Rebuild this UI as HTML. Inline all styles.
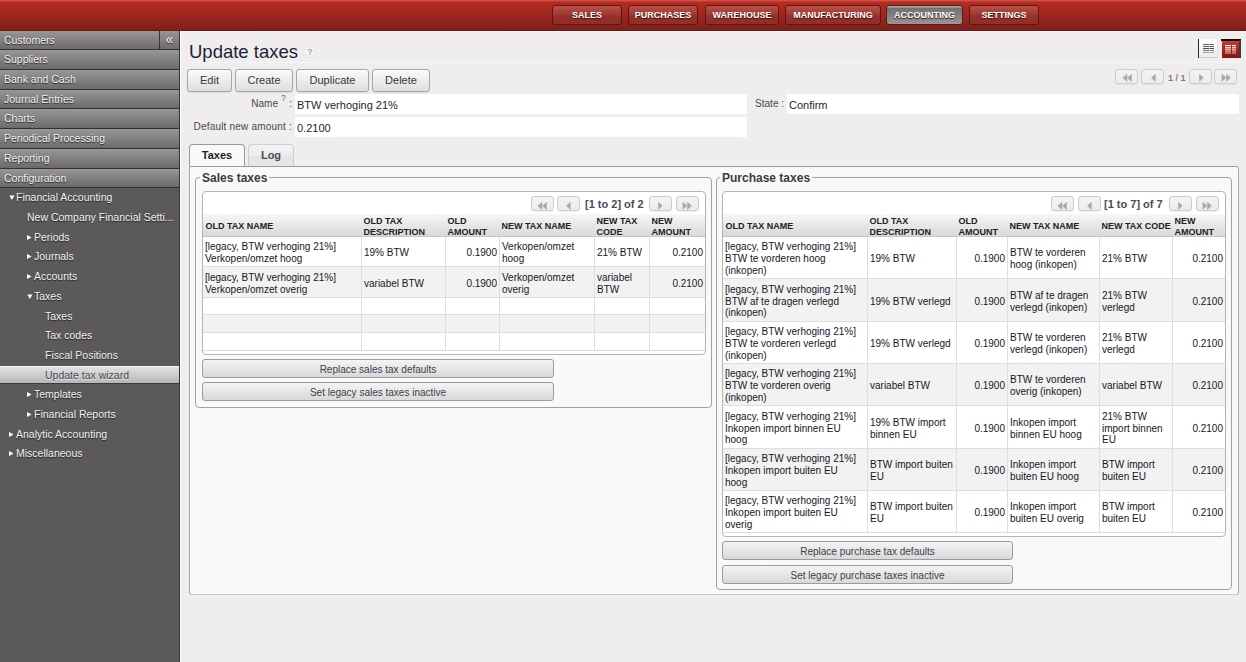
<!DOCTYPE html>
<html><head><meta charset="utf-8">
<style>
*{box-sizing:border-box;margin:0;padding:0}
html,body{width:1246px;height:662px;overflow:hidden}
body{position:relative;background:#efeded;font-family:"Liberation Sans",sans-serif;font-size:10px;color:#333}
.a{position:absolute;white-space:nowrap}
/* top bar */
#top{left:0;top:0;width:1246px;height:31px;background:linear-gradient(#cd4e44 0,#cd4e44 1px,#b72c21 2px,#80201a 29px);border-bottom:1px solid #74140f}
.mb{top:5px;height:20px;border:1px solid #5e1410;border-radius:3px;background:linear-gradient(#c0594f 0,#b34b41 1.5px,#a13c34 45%,#952f29 55%,#922d27 100%);color:#fff;font-weight:bold;font-size:9px;line-height:18px;text-align:center;text-shadow:0 1px 1px #3a0a06}
.mb.act{background:linear-gradient(#a6a9a9 0,#a0a2a2 1px,#727272 2.5px,#808080 50%,#979797 100%);border-color:#5a1a16}
/* sidebar */
#side{left:0;top:31px;width:180px;height:631px;background:#5b5959;border-right:1px solid #333}
.sh{left:0;width:179px;height:19.71px;background:linear-gradient(#989696,#6c6a6a);border-bottom:1px solid #333;color:#f4f4f4;font-size:10.5px;line-height:18px;padding-left:4px;text-shadow:0 1px 1px #222}
.si{left:0;width:179px;height:19.71px;color:#f4f4f4;font-size:10.5px;line-height:19px;text-shadow:0 1px 1px #222}
.tri{display:inline-block;width:7px}
#sel{left:0;top:365.5px;width:179px;height:18.5px;background:linear-gradient(#e2e2e2,#b6b6b6);border-top:1px solid #f4f4f4;border-bottom:1px solid #3a3a3a}
/* main */
#mainedge{left:180px;top:31px;width:1066px;height:631px;border-left:1px solid #fff;border-top:1px solid #fafafa}
.btn{top:69px;height:23px;border:1px solid #a6a6a6;border-radius:3px;background:linear-gradient(#fbfbfb,#dedede);font-size:11px;line-height:21px;text-align:center;color:#363646;box-shadow:0 1px 1px rgba(0,0,0,.08)}
.pg{width:23px;height:15px;border:1px solid #cdcdcd;border-radius:3px;background:linear-gradient(#f3f3f3,#ececec);box-shadow:0 1px 1px rgba(0,0,0,.06)}
.fld{background:#fff;font-size:11px;line-height:20px;padding-left:2px;padding-top:.5px;color:#1e1e2e}
.lbl{font-size:10px;color:#4a4a4a;text-align:right;padding-top:1px}
#panel{left:189px;top:166px;width:1050px;height:429px;background:#f9f9f9;border:1px solid #a9a9a9;border-top-color:#9a9a9a;border-bottom-color:#c9c9c9;border-radius:0 3px 3px 3px}
.fs{border:1px solid #a2a2a2;border-radius:4px}
.lg{font-size:12px;font-weight:bold;color:#3c3c3c;background:#f9f9f9;padding:0 2px}
.grid{background:#fff;border:1px solid #b4b4b4;border-radius:4px;overflow:hidden}
.gbtn{height:19px;border:1px solid #9c9c9c;border-radius:3px;background:linear-gradient(#f4f4f4,#d9d9d9);font-size:10px;line-height:17px;padding-top:1px;text-align:center;color:#40404e}
table{border-collapse:collapse;table-layout:fixed;position:absolute}
td{font-size:10px;line-height:11.7px;padding:0 2px 0 3px;vertical-align:middle;color:#2a2a3a;border-left:1px solid #dcdcdc;overflow:hidden;white-space:normal}
td:first-child{border-left:0}
tr{border-bottom:1px solid #dcdcdc}
tr.o{background:#f2f2f2}
td.r{text-align:right;padding-right:2px}
th{font-size:9px;font-weight:bold;line-height:10.9px;text-align:left;padding:0 2px 0 3px;color:#444;vertical-align:middle;white-space:normal}
.ghead{background:linear-gradient(#f7f7f7,#d9d9d9);border-bottom:1px solid #c6c6c6}
.ptxt{font-size:11px;font-weight:bold;color:#4a4a5a;line-height:15px;padding-top:2px}

.th{position:absolute;font-size:9px;font-weight:bold;line-height:10.9px;padding:3px 2px 0 2.5px;color:#222;display:flex;align-items:center;white-space:nowrap}
.row{position:absolute;background:#fff;border-bottom:1px solid #dedede}
.row.o{background:#f2f2f2}
.cell{position:absolute;top:0;bottom:0;display:flex;align-items:center;font-size:10px;line-height:11.7px;padding:3px 2px 0 2px;color:#16161e;white-space:nowrap;overflow:hidden}
.cell.bl{border-left:1px solid #dedede}
.cell.r{justify-content:flex-end;text-align:right}
</style></head><body>

<!-- TOP BAR -->
<div id="top" class="a"></div>
<div class="a mb" style="left:552px;width:70px">SALES</div>
<div class="a mb" style="left:628px;width:70px">PURCHASES</div>
<div class="a mb" style="left:705px;width:74px">WAREHOUSE</div>
<div class="a mb" style="left:785px;width:96px">MANUFACTURING</div>
<div class="a mb act" style="left:886px;width:77px">ACCOUNTING</div>
<div class="a mb" style="left:969px;width:70px">SETTINGS</div>

<!-- SIDEBAR -->
<div id="side" class="a"></div>
<div class="a sh" style="top:31px;height:19px;line-height:19px">Customers</div>
<div class="a sh" style="top:50px;height:20px;line-height:18px">Suppliers</div>
<div class="a sh" style="top:70px;height:20px;line-height:18px">Bank and Cash</div>
<div class="a sh" style="top:90px;height:19px;line-height:18px">Journal Entries</div>
<div class="a sh" style="top:109px;height:20px;line-height:18px">Charts</div>
<div class="a sh" style="top:129px;height:20px;line-height:18px">Periodical Processing</div>
<div class="a sh" style="top:149px;height:20px;line-height:18px">Reporting</div>
<div class="a sh" style="top:169px;height:19px;line-height:19px">Configuration</div>
<div class="a" style="left:159px;top:31px;width:1px;height:19px;background:#333"></div>
<div class="a" style="left:160px;top:31px;width:19px;height:18px;color:#fff;font-size:14px;line-height:16px;text-align:center;text-shadow:0 1px 1px #222">&laquo;</div>

<div id="sel" class="a"></div>
<div class="a si" style="top:188.3px;left:9px"><svg class="tri" width="7" height="8" style="vertical-align:0"><path d="M0.4 2.4 L5.4 2.4 L2.9 7 Z" fill="#fff"/></svg>Financial Accounting</div>
<div class="a si" style="top:208.0px;left:27px">New Company Financial Setti...</div>
<div class="a si" style="top:227.7px;left:27px"><svg class="tri" width="7" height="8" style="vertical-align:0"><path d="M0 2 L4.6 4.5 L0 7 Z" fill="#fff"/></svg>Periods</div>
<div class="a si" style="top:247.4px;left:27px"><svg class="tri" width="7" height="8" style="vertical-align:0"><path d="M0 2 L4.6 4.5 L0 7 Z" fill="#fff"/></svg>Journals</div>
<div class="a si" style="top:267.1px;left:27px"><svg class="tri" width="7" height="8" style="vertical-align:0"><path d="M0 2 L4.6 4.5 L0 7 Z" fill="#fff"/></svg>Accounts</div>
<div class="a si" style="top:286.8px;left:27px"><svg class="tri" width="7" height="8" style="vertical-align:0"><path d="M0.4 2.4 L5.4 2.4 L2.9 7 Z" fill="#fff"/></svg>Taxes</div>
<div class="a si" style="top:306.5px;left:45px">Taxes</div>
<div class="a si" style="top:326.2px;left:45px">Tax codes</div>
<div class="a si" style="top:345.9px;left:45px">Fiscal Positions</div>
<div class="a si" style="top:365.6px;left:45px;color:#454555;text-shadow:0 1px 0 #e8e8e8">Update tax wizard</div>
<div class="a si" style="top:385.3px;left:27px"><svg class="tri" width="7" height="8" style="vertical-align:0"><path d="M0 2 L4.6 4.5 L0 7 Z" fill="#fff"/></svg>Templates</div>
<div class="a si" style="top:405.0px;left:27px"><svg class="tri" width="7" height="8" style="vertical-align:0"><path d="M0 2 L4.6 4.5 L0 7 Z" fill="#fff"/></svg>Financial Reports</div>
<div class="a si" style="top:424.7px;left:9px"><svg class="tri" width="7" height="8" style="vertical-align:0"><path d="M0 2 L4.6 4.5 L0 7 Z" fill="#fff"/></svg>Analytic Accounting</div>
<div class="a si" style="top:444.4px;left:9px"><svg class="tri" width="7" height="8" style="vertical-align:0"><path d="M0 2 L4.6 4.5 L0 7 Z" fill="#fff"/></svg>Miscellaneous</div>

<!-- MAIN -->
<div id="mainedge" class="a"></div>
<div class="a" style="left:189px;top:41px;font-size:18.5px;line-height:22px;color:#1f1f33">Update taxes</div>
<div class="a" style="left:304px;top:46px;width:12px;height:12px;border-radius:6px;background:radial-gradient(circle at 50% 45%,#fbfbfb 0,#f1f1f1 55%,#e2e2e2 100%);box-shadow:0 0 1px rgba(0,0,0,.12);color:#a2a2a2;font-size:9px;line-height:12px;text-align:center;font-weight:bold">?</div>
<div class="a" style="left:189px;top:62px;width:1052px;height:1px;background:#f8f7f7"></div>

<!-- view switch -->
<div class="a" style="left:1198px;top:39px;width:1px;height:19px;background:#2a2a2a"></div>
<div class="a" style="left:1199px;top:39px;width:19px;height:19px;background:linear-gradient(#fdfdfd,#ececec);border-right:1px solid #e4e4e4;border-bottom:1px solid #cdcdcd"></div>
<div class="a" style="left:1221px;top:39px;width:20px;height:1.5px;background:#0c0c0c"></div>
<div class="a" style="left:1239px;top:40px;width:1.5px;height:18px;background:#3a3a3a"></div>
<div class="a" style="left:1222px;top:40.5px;width:17px;height:17.5px;background:linear-gradient(#d0382c,#a82218 50%,#7a1812)"></div>
<svg class="a" style="left:1198px;top:39px" width="44" height="20">
<rect x="5" y="5" width="6.5" height="1" fill="#6a6a6a"/><rect x="12" y="5" width="4" height="1" fill="#6a6a6a"/>
<rect x="5" y="7" width="6.5" height="1" fill="#5a5a5a"/><rect x="12" y="7" width="4" height="1" fill="#5a5a5a"/>
<rect x="5" y="9" width="6.5" height="1" fill="#4a4a4a"/><rect x="12" y="9" width="4" height="1" fill="#4a4a4a"/>
<rect x="5" y="11" width="6.5" height="1" fill="#777"/><rect x="12" y="11" width="4" height="1" fill="#777"/>
<rect x="5" y="13" width="6.5" height="1" fill="#999"/><rect x="12" y="13" width="4" height="1" fill="#999"/>
<g fill="#fff"><rect x="27" y="6" width="6" height="1.2"/><rect x="34" y="6" width="4" height="1.2"/>
<rect x="27" y="8.2" width="6" height="1.2"/><rect x="34" y="8.2" width="4" height="1.2"/>
<rect x="27" y="10.3" width="6" height="1.2" opacity=".85"/><rect x="34" y="10.3" width="4" height="1.2" opacity=".85"/>
<rect x="27" y="12.3" width="6" height="1.2" opacity=".6"/><rect x="34" y="12.3" width="4" height="1.2" opacity=".6"/>
<rect x="27" y="13.8" width="6" height="1" opacity=".45"/><rect x="34" y="13.8" width="4" height="1" opacity=".45"/></g>
</svg>
<!-- action buttons -->
<div class="a btn" style="left:187px;width:45px">Edit</div>
<div class="a btn" style="left:235px;width:58px">Create</div>
<div class="a btn" style="left:296px;width:73px">Duplicate</div>
<div class="a btn" style="left:372px;width:58px">Delete</div>

<!-- top pager -->
<div class="a" style="left:1168px;top:71px;font-size:9px;font-weight:bold;color:#857a6e;line-height:15px">1 / 1</div>

<!-- form -->
<div class="a lbl" style="left:200px;top:94px;width:78px;line-height:18px">Name</div>
<div class="a" style="left:281px;top:93px;font-size:8.5px;color:#3f8a3a;line-height:10px">?</div>
<div class="a lbl" style="left:286px;top:94px;width:6px;line-height:18px">:</div>
<div class="a fld" style="left:295px;top:94px;width:452px;height:20px">BTW verhoging 21%</div>
<div class="a lbl" style="left:186px;top:117px;width:106px;line-height:18px;letter-spacing:.2px">Default new amount :</div>
<div class="a fld" style="left:295px;top:117px;width:452px;height:20px">0.2100</div>
<div class="a lbl" style="left:740px;top:94px;width:44px;line-height:18px">State :</div>
<div class="a fld" style="left:787px;top:94px;width:452px;height:20px">Confirm</div>

<!-- tabs -->
<div id="panel" class="a"></div>
<div class="a" style="left:189px;top:144px;width:56px;height:22px;border:1px solid #9a9a9a;border-bottom:0;border-radius:4px 4px 0 0;background:#f9f9f9;font-size:11px;font-weight:bold;line-height:21px;text-align:center;color:#222">Taxes</div>
<div class="a" style="left:248px;top:144px;width:46px;height:22px;border:1px solid #cfcfcf;border-bottom:0;border-radius:4px 4px 0 0;background:linear-gradient(#f3f3f3,#ececec 50%,#e3e3e3 52%,#e9e9e9);font-size:11px;font-weight:bold;line-height:20px;text-align:center;color:#4a4a5a">Log</div>

<!-- SALES -->
<div class="a fs" style="left:195px;top:177px;width:517px;height:231px"></div>
<div class="a lg" style="left:200px;top:170.5px;line-height:14px">Sales taxes</div>
<div class="a grid" style="left:202px;top:191px;width:504px;height:164px"></div>

<!-- PURCHASE -->
<div class="a fs" style="left:716px;top:177px;width:516px;height:413px"></div>
<div class="a lg" style="left:720px;top:170.5px;line-height:14px">Purchase taxes</div>
<div class="a grid" style="left:722px;top:191px;width:504px;height:346px"></div>

<!-- TOP PAGER -->
<div class="a pg" style="left:1115px;top:69px;height:15px"><svg width="21" height="14" style="position:absolute;left:.7px;top:-1px;overflow:visible"><path d="M5.6 8.8 L10.2 4.7 L10.2 12.9 Z M10.2 8.8 L14.8 4.7 L14.8 12.9 Z" fill="#a9a9a9"/></svg></div>
<div class="a pg" style="left:1141px;top:69px;height:15px"><svg width="21" height="14" style="position:absolute;left:.7px;top:-1px;overflow:visible"><path d="M8.1 8.8 L12.6 4.7 L12.6 12.9 Z" fill="#a9a9a9"/></svg></div>
<div class="a pg" style="left:1189px;top:69px;height:15px"><svg width="21" height="14" style="position:absolute;left:.7px;top:-1px;overflow:visible"><path d="M8.2 4.7 L12.5 8.8 L8.2 12.9 Z" fill="#a9a9a9"/></svg></div>
<div class="a pg" style="left:1214px;top:69px;height:15px"><svg width="21" height="14" style="position:absolute;left:.7px;top:-1px;overflow:visible"><path d="M5.6 4.7 L10.2 8.8 L5.6 12.9 Z M10.2 4.7 L14.8 8.8 L10.2 12.9 Z" fill="#a9a9a9"/></svg></div>
<!-- SALES GRID -->
<div class="a pg" style="left:531px;top:196px"><svg width="21" height="14" style="position:absolute;left:0;top:0;overflow:visible"><path d="M5.6 8.8 L10.2 4.7 L10.2 12.9 Z M10.2 8.8 L14.8 4.7 L14.8 12.9 Z" fill="#a9a9a9"/></svg></div>
<div class="a pg" style="left:557px;top:196px"><svg width="21" height="14" style="position:absolute;left:0;top:0;overflow:visible"><path d="M8.1 8.8 L12.6 4.7 L12.6 12.9 Z" fill="#a9a9a9"/></svg></div>
<div class="a pg" style="left:649px;top:196px"><svg width="21" height="14" style="position:absolute;left:0;top:0;overflow:visible"><path d="M8.2 4.7 L12.5 8.8 L8.2 12.9 Z" fill="#a9a9a9"/></svg></div>
<div class="a pg" style="left:676px;top:196px"><svg width="21" height="14" style="position:absolute;left:0;top:0;overflow:visible"><path d="M5.6 4.7 L10.2 8.8 L5.6 12.9 Z M10.2 4.7 L14.8 8.8 L10.2 12.9 Z" fill="#a9a9a9"/></svg></div>
<div class="a ptxt" style="left:585px;top:195px">[1 to 2] of 2</div>
<div class="a ghead" style="left:203px;top:214px;width:502px;height:23px"></div>
<div class="a th" style="left:203px;top:214px;width:158px;height:22px">OLD TAX NAME</div>
<div class="a th" style="left:361px;top:214px;width:84px;height:22px">OLD TAX<br>DESCRIPTION</div>
<div class="a th" style="left:445px;top:214px;width:54px;height:22px">OLD<br>AMOUNT</div>
<div class="a th" style="left:499px;top:214px;width:95px;height:22px">NEW TAX NAME</div>
<div class="a th" style="left:594px;top:214px;width:55px;height:22px">NEW TAX<br>CODE</div>
<div class="a th" style="left:649px;top:214px;width:56px;height:22px">NEW<br>AMOUNT</div>
<div class="a row" style="left:203px;top:237px;width:502px;height:30px">
<div class="cell" style="left:0px;width:158px">[legacy, BTW verhoging 21%]<br>Verkopen/omzet hoog</div>
<div class="cell bl" style="left:158px;width:84px">19% BTW</div>
<div class="cell r bl" style="left:242px;width:54px">0.1900</div>
<div class="cell bl" style="left:296px;width:95px">Verkopen/omzet<br>hoog</div>
<div class="cell bl" style="left:391px;width:55px">21% BTW</div>
<div class="cell r bl" style="left:446px;width:56px">0.2100</div>
</div>
<div class="a row o" style="left:203px;top:267px;width:502px;height:31px">
<div class="cell" style="left:0px;width:158px">[legacy, BTW verhoging 21%]<br>Verkopen/omzet overig</div>
<div class="cell bl" style="left:158px;width:84px">variabel BTW</div>
<div class="cell r bl" style="left:242px;width:54px">0.1900</div>
<div class="cell bl" style="left:296px;width:95px">Verkopen/omzet<br>overig</div>
<div class="cell bl" style="left:391px;width:55px">variabel<br>BTW</div>
<div class="cell r bl" style="left:446px;width:56px">0.2100</div>
</div>
<div class="a row" style="left:203px;top:298px;width:502px;height:17px">
<div class="cell" style="left:0px;width:158px"></div>
<div class="cell bl" style="left:158px;width:84px"></div>
<div class="cell r bl" style="left:242px;width:54px"></div>
<div class="cell bl" style="left:296px;width:95px"></div>
<div class="cell bl" style="left:391px;width:55px"></div>
<div class="cell r bl" style="left:446px;width:56px"></div>
</div>
<div class="a row o" style="left:203px;top:315px;width:502px;height:18px">
<div class="cell" style="left:0px;width:158px"></div>
<div class="cell bl" style="left:158px;width:84px"></div>
<div class="cell r bl" style="left:242px;width:54px"></div>
<div class="cell bl" style="left:296px;width:95px"></div>
<div class="cell bl" style="left:391px;width:55px"></div>
<div class="cell r bl" style="left:446px;width:56px"></div>
</div>
<div class="a row" style="left:203px;top:333px;width:502px;height:18px">
<div class="cell" style="left:0px;width:158px"></div>
<div class="cell bl" style="left:158px;width:84px"></div>
<div class="cell r bl" style="left:242px;width:54px"></div>
<div class="cell bl" style="left:296px;width:95px"></div>
<div class="cell bl" style="left:391px;width:55px"></div>
<div class="cell r bl" style="left:446px;width:56px"></div>
</div>
<div class="a gbtn" style="left:202px;top:359px;width:352px">Replace sales tax defaults</div>
<div class="a gbtn" style="left:202px;top:382px;width:352px">Set legacy sales taxes inactive</div>
<!-- PURCHASE GRID -->
<div class="a pg" style="left:1051px;top:196px"><svg width="21" height="14" style="position:absolute;left:0;top:0;overflow:visible"><path d="M5.6 8.8 L10.2 4.7 L10.2 12.9 Z M10.2 8.8 L14.8 4.7 L14.8 12.9 Z" fill="#a9a9a9"/></svg></div>
<div class="a pg" style="left:1078px;top:196px"><svg width="21" height="14" style="position:absolute;left:0;top:0;overflow:visible"><path d="M8.1 8.8 L12.6 4.7 L12.6 12.9 Z" fill="#a9a9a9"/></svg></div>
<div class="a pg" style="left:1169px;top:196px"><svg width="21" height="14" style="position:absolute;left:0;top:0;overflow:visible"><path d="M8.2 4.7 L12.5 8.8 L8.2 12.9 Z" fill="#a9a9a9"/></svg></div>
<div class="a pg" style="left:1196px;top:196px"><svg width="21" height="14" style="position:absolute;left:0;top:0;overflow:visible"><path d="M5.6 4.7 L10.2 8.8 L5.6 12.9 Z M10.2 4.7 L14.8 8.8 L10.2 12.9 Z" fill="#a9a9a9"/></svg></div>
<div class="a ptxt" style="left:1104px;top:195px">[1 to 7] of 7</div>
<div class="a ghead" style="left:723px;top:214px;width:502px;height:23px"></div>
<div class="a th" style="left:723px;top:214px;width:144px;height:22px">OLD TAX NAME</div>
<div class="a th" style="left:867px;top:214px;width:89px;height:22px">OLD TAX<br>DESCRIPTION</div>
<div class="a th" style="left:956px;top:214px;width:51px;height:22px">OLD<br>AMOUNT</div>
<div class="a th" style="left:1007px;top:214px;width:92px;height:22px">NEW TAX NAME</div>
<div class="a th" style="left:1099px;top:214px;width:73px;height:22px">NEW TAX CODE</div>
<div class="a th" style="left:1172px;top:214px;width:53px;height:22px">NEW<br>AMOUNT</div>
<div class="a row" style="left:723px;top:237px;width:502px;height:42px">
<div class="cell" style="left:0px;width:144px">[legacy, BTW verhoging 21%]<br>BTW te vorderen hoog<br>(inkopen)</div>
<div class="cell bl" style="left:144px;width:89px">19% BTW</div>
<div class="cell r bl" style="left:233px;width:51px">0.1900</div>
<div class="cell bl" style="left:284px;width:92px">BTW te vorderen<br>hoog (inkopen)</div>
<div class="cell bl" style="left:376px;width:73px">21% BTW</div>
<div class="cell r bl" style="left:449px;width:53px">0.2100</div>
</div>
<div class="a row o" style="left:723px;top:279px;width:502px;height:43px">
<div class="cell" style="left:0px;width:144px">[legacy, BTW verhoging 21%]<br>BTW af te dragen verlegd<br>(inkopen)</div>
<div class="cell bl" style="left:144px;width:89px">19% BTW verlegd</div>
<div class="cell r bl" style="left:233px;width:51px">0.1900</div>
<div class="cell bl" style="left:284px;width:92px">BTW af te dragen<br>verlegd (inkopen)</div>
<div class="cell bl" style="left:376px;width:73px">21% BTW<br>verlegd</div>
<div class="cell r bl" style="left:449px;width:53px">0.2100</div>
</div>
<div class="a row" style="left:723px;top:322px;width:502px;height:42px">
<div class="cell" style="left:0px;width:144px">[legacy, BTW verhoging 21%]<br>BTW te vorderen verlegd<br>(inkopen)</div>
<div class="cell bl" style="left:144px;width:89px">19% BTW verlegd</div>
<div class="cell r bl" style="left:233px;width:51px">0.1900</div>
<div class="cell bl" style="left:284px;width:92px">BTW te vorderen<br>verlegd (inkopen)</div>
<div class="cell bl" style="left:376px;width:73px">21% BTW<br>verlegd</div>
<div class="cell r bl" style="left:449px;width:53px">0.2100</div>
</div>
<div class="a row o" style="left:723px;top:364px;width:502px;height:42px">
<div class="cell" style="left:0px;width:144px">[legacy, BTW verhoging 21%]<br>BTW te vorderen overig<br>(inkopen)</div>
<div class="cell bl" style="left:144px;width:89px">variabel BTW</div>
<div class="cell r bl" style="left:233px;width:51px">0.1900</div>
<div class="cell bl" style="left:284px;width:92px">BTW te vorderen<br>overig (inkopen)</div>
<div class="cell bl" style="left:376px;width:73px">variabel BTW</div>
<div class="cell r bl" style="left:449px;width:53px">0.2100</div>
</div>
<div class="a row" style="left:723px;top:406px;width:502px;height:43px">
<div class="cell" style="left:0px;width:144px">[legacy, BTW verhoging 21%]<br>Inkopen import binnen EU<br>hoog</div>
<div class="cell bl" style="left:144px;width:89px">19% BTW import<br>binnen EU</div>
<div class="cell r bl" style="left:233px;width:51px">0.1900</div>
<div class="cell bl" style="left:284px;width:92px">Inkopen import<br>binnen EU hoog</div>
<div class="cell bl" style="left:376px;width:73px">21% BTW<br>import binnen<br>EU</div>
<div class="cell r bl" style="left:449px;width:53px">0.2100</div>
</div>
<div class="a row o" style="left:723px;top:449px;width:502px;height:42px">
<div class="cell" style="left:0px;width:144px">[legacy, BTW verhoging 21%]<br>Inkopen import buiten EU<br>hoog</div>
<div class="cell bl" style="left:144px;width:89px">BTW import buiten<br>EU</div>
<div class="cell r bl" style="left:233px;width:51px">0.1900</div>
<div class="cell bl" style="left:284px;width:92px">Inkopen import<br>buiten EU hoog</div>
<div class="cell bl" style="left:376px;width:73px">BTW import<br>buiten EU</div>
<div class="cell r bl" style="left:449px;width:53px">0.2100</div>
</div>
<div class="a row" style="left:723px;top:491px;width:502px;height:42px">
<div class="cell" style="left:0px;width:144px">[legacy, BTW verhoging 21%]<br>Inkopen import buiten EU<br>overig</div>
<div class="cell bl" style="left:144px;width:89px">BTW import buiten<br>EU</div>
<div class="cell r bl" style="left:233px;width:51px">0.1900</div>
<div class="cell bl" style="left:284px;width:92px">Inkopen import<br>buiten EU overig</div>
<div class="cell bl" style="left:376px;width:73px">BTW import<br>buiten EU</div>
<div class="cell r bl" style="left:449px;width:53px">0.2100</div>
</div>
<div class="a gbtn" style="left:722px;top:541px;width:291px">Replace purchase tax defaults</div>
<div class="a gbtn" style="left:722px;top:565px;width:291px">Set legacy purchase taxes inactive</div>
</body></html>
